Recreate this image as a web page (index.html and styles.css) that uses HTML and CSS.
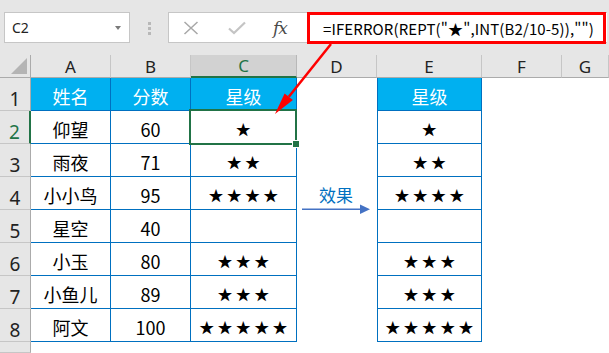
FILE: index.html
```html
<!DOCTYPE html>
<html lang="zh-CN">
<head>
<meta charset="utf-8">
<title>IFERROR REPT stars</title>
<link rel="stylesheet" href="styles.css">
</head>
<body>
<div class="app">
  <div class="fbar">
    <div class="namebox">
      <span class="name">C2</span>
      <svg class="dd" width="6" height="4" viewBox="0 0 6 4"><path d="M0 0H6L3 4Z" fill="#7a7a7a"/></svg>
    </div>
    <div class="sep"><i></i><i></i><i></i></div>
    <div class="fbox">
      <div class="ficons">
        <svg class="ic-x" width="16" height="14" viewBox="0 0 16 14"><path d="M1.5 1L14.5 13M14.5 1L1.5 13" stroke="#a8a8a8" stroke-width="1.5" fill="none"/></svg>
        <svg class="ic-ok" width="18" height="14" viewBox="0 0 18 14"><path d="M1 7.5L6 12L17 1.5" stroke="#c4c4c4" stroke-width="2.2" fill="none"/></svg>
        <span class="fx">fx</span>
      </div>
      <div class="finput">=IFERROR(REPT("★",INT(B2/10-5)),"")</div>
    </div>
  </div>

  <div class="sheet">
    <div class="ch corner"><svg width="16" height="16" viewBox="0 0 16 16"><path d="M16 0V16H0Z" fill="#b4b4b4"/></svg></div>
    <div class="ch">A</div>
    <div class="ch">B</div>
    <div class="ch csel">C</div>
    <div class="ch">D</div>
    <div class="ch">E</div>
    <div class="ch">F</div>
    <div class="ch">G</div>

    <div class="rh">1</div>
    <div class="c hd">姓名</div><div class="c hd">分数</div><div class="c hd">星级</div>
    <div class="x"></div><div class="c hd e">星级</div><div class="x"></div><div class="x"></div>

    <div class="rh rsel">2</div>
    <div class="c">仰望</div><div class="c">60</div><div class="c star sel">★</div>
    <div class="x"></div><div class="c star e">★</div><div class="x"></div><div class="x"></div>

    <div class="rh">3</div>
    <div class="c">雨夜</div><div class="c">71</div><div class="c star">★★</div>
    <div class="x"></div><div class="c star e">★★</div><div class="x"></div><div class="x"></div>

    <div class="rh">4</div>
    <div class="c">小小鸟</div><div class="c">95</div><div class="c star">★★★★</div>
    <div class="x"></div><div class="c star e">★★★★</div><div class="x"></div><div class="x"></div>

    <div class="rh">5</div>
    <div class="c">星空</div><div class="c">40</div><div class="c star"></div>
    <div class="x"></div><div class="c star e"></div><div class="x"></div><div class="x"></div>

    <div class="rh">6</div>
    <div class="c">小玉</div><div class="c">80</div><div class="c star">★★★</div>
    <div class="x"></div><div class="c star e">★★★</div><div class="x"></div><div class="x"></div>

    <div class="rh">7</div>
    <div class="c">小鱼儿</div><div class="c">89</div><div class="c star">★★★</div>
    <div class="x"></div><div class="c star e">★★★</div><div class="x"></div><div class="x"></div>

    <div class="rh">8</div>
    <div class="c">阿文</div><div class="c">100</div><div class="c star">★★★★★</div>
    <div class="x"></div><div class="c star e">★★★★★</div><div class="x"></div><div class="x"></div>

    <div class="rh"></div>
  </div>

  <div class="effect">效果</div>
  <svg class="anno" width="609" height="353" viewBox="0 0 609 353">
    <line x1="331" y1="44" x2="288.8" y2="96.8" stroke="#ff0000" stroke-width="2.5"/>
    <polygon points="275,114 292.9,100.1 284.6,93.5" fill="#ff0000"/>
    <line x1="302" y1="209.3" x2="362" y2="209.3" stroke="#4472c4" stroke-width="1.5"/>
    <polygon points="360,204.5 370,209.3 360,214" fill="#4472c4"/>
  </svg>
</div>
</body>
</html>
```

FILE: styles.css
```css
html, body {
  margin: 0;
  padding: 0;
}
body {
  width: 609px;
  height: 353px;
  overflow: hidden;
  background: #ffffff;
  font-family: "Noto Sans CJK SC", "Noto Sans", sans-serif;
}
.app {
  position: relative;
  width: 609px;
  height: 353px;
}

/* formula bar */
.fbar {
  height: 55px;
  box-sizing: border-box;
  background: #e6e6e6;
  display: flex;
  align-items: flex-start;
  padding: 12px 0 0 4px;
}
.namebox {
  width: 126px;
  height: 31px;
  box-sizing: border-box;
  border: 1px solid #c6c6c6;
  background: #fff;
  display: flex;
  align-items: center;
  justify-content: space-between;
  padding: 0 8px 0 7px;
}
.name {
  font: 14px "Noto Sans", sans-serif;
  color: #222;
}
.sep {
  width: 38px;
  display: flex;
  flex-direction: column;
  align-items: center;
  gap: 2px;
  padding-top: 10px;
}
.sep i {
  display: block;
  width: 3px;
  height: 3px;
  background: #b8b8b8;
}
.fbox {
  width: 439px;
  height: 31px;
  box-sizing: border-box;
  border: 1px solid #c6c6c6;
  border-right: none;
  background: #fff;
  display: flex;
  align-items: flex-start;
}
.ficons {
  width: 138px;
  height: 29px;
  display: flex;
  align-items: center;
  flex: none;
}
.ic-x { margin-left: 14px; }
.ic-ok { margin-left: 29px; }
.fx {
  margin-left: 27px;
  font: italic 17px "DejaVu Serif", "Liberation Serif", serif;
  color: #4a4a4a;
  letter-spacing: -1px;
}
.finput {
  margin-top: -1px;
  width: 299px;
  height: 32px;
  box-sizing: border-box;
  border: 3px solid #ff0000;
  padding-left: 13px;
  display: flex;
  align-items: center;
  font-size: 15px;
  letter-spacing: 0.12px;
  color: #000;
  white-space: nowrap;
  flex: none;
}

/* sheet grid */
.sheet {
  display: grid;
  grid-template-columns: 31px 80px 80px 106px 80px 105px 80px 47px;
  grid-template-rows: 23px repeat(8, 33px) 11px;
}
.ch {
  background: #e6e6e6;
  box-sizing: border-box;
  border-right: 1px solid #c6c6c6;
  border-bottom: 1px solid #ababab;
  display: flex;
  align-items: center;
  justify-content: center;
  font: 17px "Noto Sans", sans-serif;
  color: #222;
  line-height: 1;
}
.ch.corner {
  align-items: flex-end;
  justify-content: flex-end;
  padding: 0 3px 3px 0;
  border-right-color: #ababab;
}
.ch.csel {
  background: #d2d2d2;
  color: #217346;
  border-bottom: 2px solid #217346;
  border-right-color: #b8b8b8;
}
.rh {
  grid-column: 1;
  background: #e6e6e6;
  box-sizing: border-box;
  border-right: 1px solid #ababab;
  border-bottom: 1px solid #c6c6c6;
  display: flex;
  align-items: flex-end;
  justify-content: center;
  font: 19px "Noto Sans", sans-serif;
  line-height: 1;
  color: #222;
  padding-bottom: 1px;
}
.rh.rsel {
  color: #217346;
  border-right: 2px solid #217346;
}
.c {
  box-sizing: border-box;
  border-right: 1px solid #0070c0;
  border-bottom: 1px solid #0070c0;
  display: flex;
  align-items: center;
  justify-content: center;
  padding-top: 3px;
  font-size: 18px;
  line-height: 1;
  color: #000;
  white-space: nowrap;
}
.c.star {
  font-size: 15px;
  letter-spacing: 3.3px;
  padding-left: 3px;
  padding-top: 2px;
}
.c.hd {
  background: #00b0f0;
  color: #fff;
}
.c.e {
  border-left: 1px solid #0070c0;
}
.c.sel {
  position: relative;
}
.c.sel::before {
  content: "";
  position: absolute;
  left: -2px;
  top: -2px;
  right: -1px;
  bottom: -2px;
  border: 2px solid #217346;
}
.c.sel::after {
  content: "";
  position: absolute;
  right: -3px;
  bottom: -4px;
  width: 6px;
  height: 6px;
  background: #217346;
  box-shadow: 0 0 0 1px #fff;
}

/* annotations */
.effect {
  position: absolute;
  left: 319px;
  top: 186px;
  font-size: 17px;
  line-height: 1;
  color: #0070c0;
}
.anno {
  position: absolute;
  left: 0;
  top: 0;
  pointer-events: none;
}
```
